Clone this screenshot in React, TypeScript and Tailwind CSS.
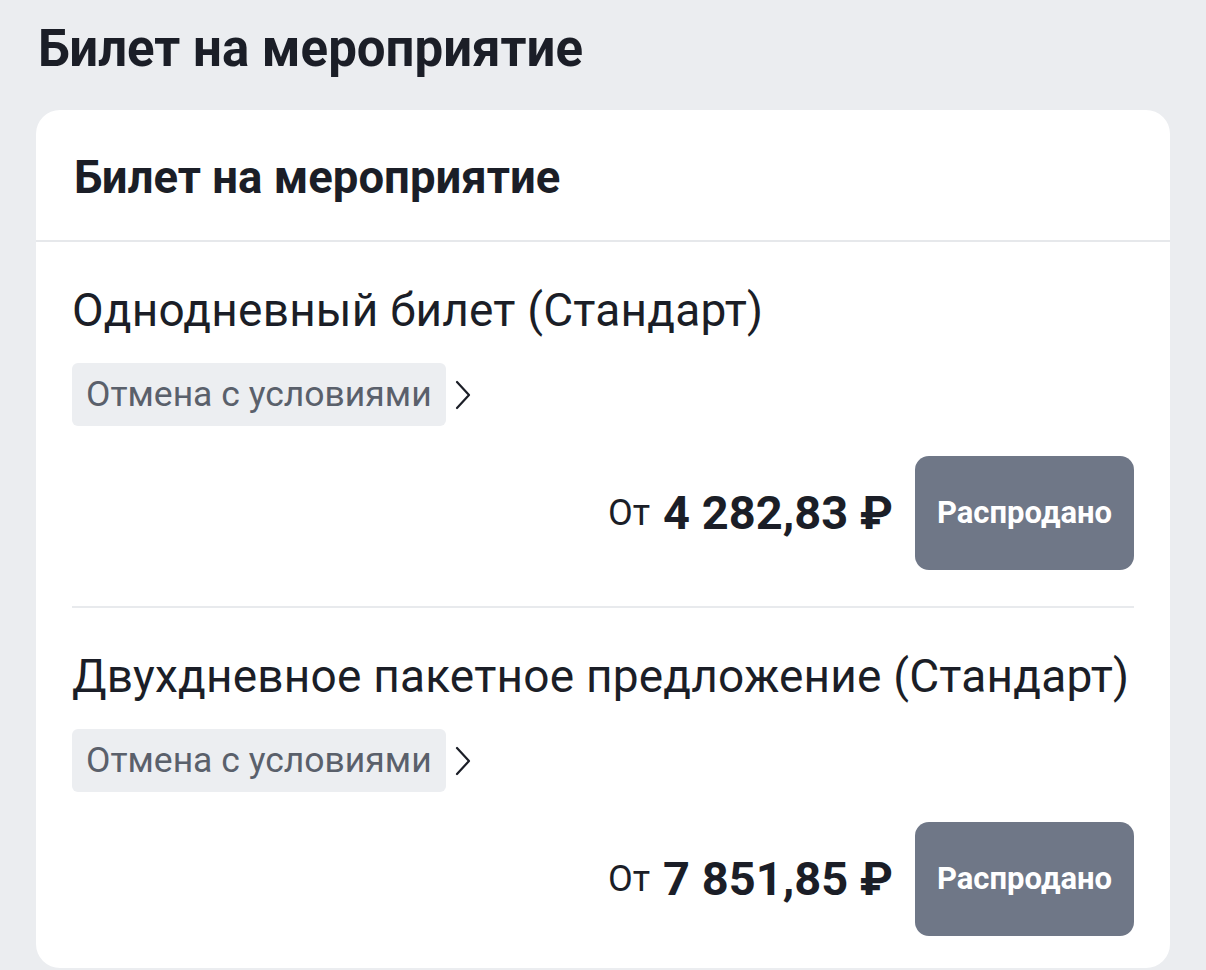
const tickets = [
  { name: "Однодневный билет (Стандарт)", price: "4 282,83 ₽" },
  { name: "Двухдневное пакетное предложение (Стандарт)", price: "7 851,85 ₽" },
];

function Chevron() {
  return (
    <svg viewBox="0 0 18 32" className="ml-[8px] h-[32px] w-[18px]" fill="none" stroke="#1b1e27" strokeWidth="2.2" strokeLinecap="round" strokeLinejoin="round">
      <path d="M3 3 L15 16 L3 29" />
    </svg>
  );
}

function TicketRow({ name, price, last }: { name: string; price: string; last?: boolean }) {
  return (
    <div className={last ? "pt-[41px] pb-[32px]" : "border-b-2 border-[#e8eaed] pt-[41px] pb-[36px]"}>
      <div className="text-[46px] leading-[54px] tracking-[0.2px] text-[#1b1e27]">{name}</div>
      <div className="mt-[26px] flex items-center">
        <span className="flex h-[63px] items-center rounded-[6px] bg-[#eceef1] px-[14px] text-[35.5px] text-[#5a606b]">
          Отмена с условиями
        </span>
        <Chevron />
      </div>
      <div className="mt-[30px] flex items-center justify-end">
        <span className="text-[36px] text-[#1b1e27]">От</span>
        <span className="ml-[13px] text-[47px] font-bold text-[#1b1e27]">{price}</span>
        <button className="ml-[22px] flex h-[114px] w-[219px] items-center justify-center rounded-[14px] bg-[#6f7787] text-[31px] font-bold text-white">
          Распродано
        </button>
      </div>
    </div>
  );
}

export default function App() {
  return (
    <div className="min-h-screen overflow-hidden bg-[#ebedf0] px-[36px] pt-[19px] font-['Roboto',sans-serif]">
      <h1 className="px-[2px] text-[51px] font-bold leading-[60px] text-[#1b1e27]">Билет на мероприятие</h1>
      <div className="mt-[31px] rounded-[24px] bg-white">
        <div className="flex h-[132px] items-center border-b-2 border-[#e6e8eb] px-[38px] pt-[6px]">
          <h2 className="text-[45.5px] font-bold text-[#1b1e27]">Билет на мероприятие</h2>
        </div>
        <div className="px-[36px]">
          {tickets.map((t, i) => (
            <TicketRow key={t.name} name={t.name} price={t.price} last={i === tickets.length - 1} />
          ))}
        </div>
      </div>
    </div>
  );
}
